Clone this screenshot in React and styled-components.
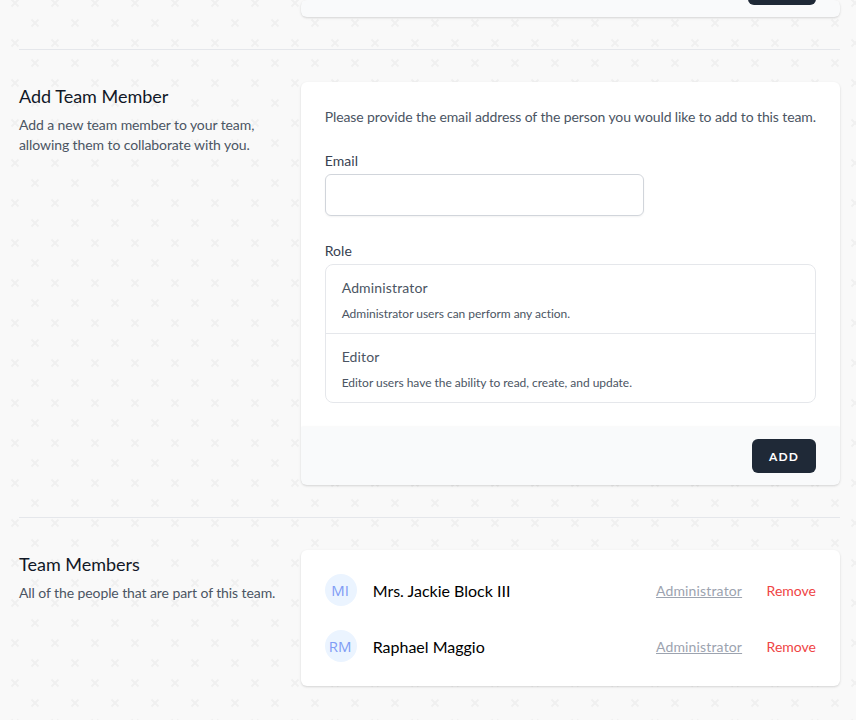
import React from "react";
import styled, { createGlobalStyle } from "styled-components";

const crosses = encodeURIComponent(
  `<svg xmlns="http://www.w3.org/2000/svg" width="40" height="40" viewBox="0 0 40 40"><path fill="none" stroke="#f0f0f0" stroke-width="2" d="M6.5 6.5L13.5 13.5M13.5 6.5L6.5 13.5M26.5 26.5L33.5 33.5M33.5 26.5L26.5 33.5"/></svg>`
);

const GlobalStyle = createGlobalStyle`
  *, *::before, *::after { box-sizing: border-box; }
  body {
    margin: 0;
    overflow: hidden;
    background: #f9f9f9 url("data:image/svg+xml,${crosses}") 5px -7px;
    font-family: Lato, "Liberation Sans", sans-serif;
    font-size: 16px;
    line-height: 24px;
    color: #000;
  }
  button, input { font-family: inherit; margin: 0; }
`;

const Page = styled.main`
  height: 720px;
  overflow: hidden;
  padding: 0 16px 0 19px;
`;

const Section = styled.section`
  display: grid;
  grid-template-columns: repeat(3, minmax(0, 1fr));
  column-gap: 24px;
`;

const Divider = styled.hr`
  margin: 32px 0;
  border: 0;
  border-top: 1px solid #e5e7eb;
`;

const Title = styled.h3`
  margin: 0;
  font-size: 18px;
  line-height: 28px;
  font-weight: 400;
  color: #111827;
`;

const Description = styled.p`
  margin: 5px 0 0;
  font-size: 14px;
  line-height: 20px;
  letter-spacing: -0.09px;
  color: #4b5563;
`;

const Card = styled.div`
  grid-column: 2 / span 2;
  overflow: hidden;
  border-radius: 6px;
  background: #fff;
  box-shadow: 0 1px 3px rgba(0, 0, 0, 0.1), 0 1px 2px rgba(0, 0, 0, 0.06);
`;

const CardBody = styled.div`
  display: grid;
  grid-template-columns: repeat(6, minmax(0, 1fr));
  gap: 24px;
  padding: 24px;
`;

const CardFooter = styled.div`
  display: flex;
  justify-content: flex-end;
  padding: 12px 24px;
  background: #f9fafb;
  box-shadow: 0 1px 3px rgba(0, 0, 0, 0.1), 0 1px 2px rgba(0, 0, 0, 0.06);
`;

const TopFooter = styled(CardFooter)`
  height: 17px;
  padding-top: 0;
  align-items: flex-end;
`;

const Button = styled.button`
  flex: none;
  width: ${(p) => p.$width}px;
  height: 34px;
  padding: 9px 0 7px;
  border: 1px solid transparent;
  border-radius: 6px;
  background: #1f2937;
  color: #fff;
  font-size: 12px;
  line-height: 16px;
  font-weight: 700;
  letter-spacing: 1.2px;
  text-transform: uppercase;
`;

const Intro = styled.div`
  grid-column: span 6;
  padding-top: 1px;
  margin-bottom: -1px;
  font-size: 14px;
  line-height: 20px;
  letter-spacing: -0.1px;
  color: #4b5563;
  white-space: nowrap;
`;

const Field = styled.div`
  grid-column: span ${(p) => p.$span};
`;

const Label = styled.label`
  display: block;
  padding-top: 1px;
  margin-bottom: 3px;
  font-size: 14px;
  line-height: 20px;
  letter-spacing: 0.1px;
  color: #374151;
`;

const Input = styled.input`
  display: block;
  width: 100%;
  height: 42px;
  padding: 8px 12px;
  border: 1px solid #d1d5db;
  border-radius: 6px;
  background: #fff;
  box-shadow: 0 1px 2px rgba(0, 0, 0, 0.05);
`;

const RoleList = styled.div`
  border: 1px solid #e5e7eb;
  border-radius: 8px;
`;

const Role = styled.div`
  padding: 13px 16px 11px;
  color: #4b5563;

  & + & {
    border-top: 1px solid #e5e7eb;
  }
`;

const RoleName = styled.div`
  font-size: 14px;
  line-height: 20px;
  letter-spacing: 0.15px;
`;

const RoleHint = styled.div`
  margin-top: 8px;
  font-size: 12px;
  line-height: 16px;
  letter-spacing: -0.025px;
`;

const MemberList = styled.div`
  display: flex;
  flex-direction: column;
  gap: 24px;
  padding: 24px;
`;

const Member = styled.div`
  display: flex;
  align-items: center;
  height: 32px;
`;

const Avatar = styled.div`
  display: flex;
  align-items: center;
  justify-content: center;
  width: 32px;
  height: 32px;
  padding-right: 1px;
  border-radius: 50%;
  background: #ebf4ff;
  color: #7f9cf5;
  font-family: "Open Sans", "Noto Sans", sans-serif;
  font-size: 15px;
  line-height: 32px;
`;

const Name = styled.div`
  flex: 1;
  margin-left: 16px;
  padding-top: 2px;
`;

const Action = styled.a`
  margin-left: ${(p) => (p.$danger ? "24.5px" : "8px")};
  padding-top: 2px;
  font-size: 14px;
  line-height: 24px;
  letter-spacing: ${(p) => (p.$danger ? "0" : "0.15px")};
  color: ${(p) => (p.$danger ? "#ef4444" : "#9ca3af")};
  text-decoration: ${(p) => (p.$danger ? "none" : "underline")};
`;

const roles = [
  ["Administrator", "Administrator users can perform any action."],
  ["Editor", "Editor users have the ability to read, create, and update."],
];

const members = [
  ["MI", "Mrs. Jackie Block III"],
  ["RM", "Raphael Maggio"],
];

export default function App() {
  return (
    <>
      <GlobalStyle />
      <Page>
        <Section>
          <Card>
            <TopFooter>
              <Button $width={68} aria-label="Save" />
            </TopFooter>
          </Card>
        </Section>
        <Divider />
        <Section>
          <div>
            <Title>Add Team Member</Title>
            <Description>
              Add a new team member to your team, allowing them to collaborate with you.
            </Description>
          </div>
          <Card>
            <CardBody>
              <Intro>
                Please provide the email address of the person you would like to add to this team.
              </Intro>
              <Field $span={4}>
                <Label htmlFor="email">Email</Label>
                <Input id="email" type="email" />
              </Field>
              <Field $span={6}>
                <Label as="div">Role</Label>
                <RoleList>
                  {roles.map(([name, hint]) => (
                    <Role key={name}>
                      <RoleName>{name}</RoleName>
                      <RoleHint>{hint}</RoleHint>
                    </Role>
                  ))}
                </RoleList>
              </Field>
            </CardBody>
            <CardFooter>
              <Button $width={64}>Add</Button>
            </CardFooter>
          </Card>
        </Section>
        <Divider />
        <Section>
          <div>
            <Title>Team Members</Title>
            <Description>All of the people that are part of this team.</Description>
          </div>
          <Card>
            <MemberList>
              {members.map(([initials, name]) => (
                <Member key={name}>
                  <Avatar>{initials}</Avatar>
                  <Name>{name}</Name>
                  <Action>Administrator</Action>
                  <Action $danger>Remove</Action>
                </Member>
              ))}
            </MemberList>
          </Card>
        </Section>
      </Page>
    </>
  );
}
